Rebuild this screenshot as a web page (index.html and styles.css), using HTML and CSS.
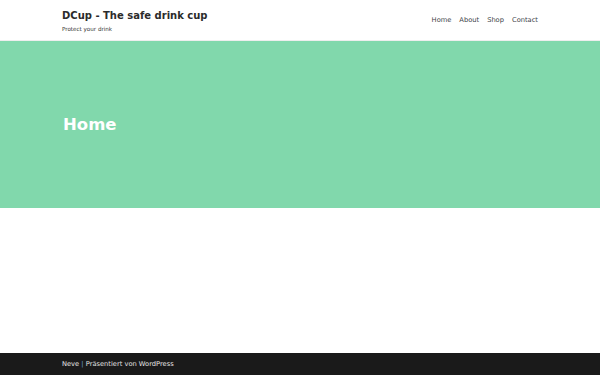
FILE: index.html
```html
<!DOCTYPE html>
<html lang="de">

<head>
  <meta charset="UTF-8">
  <meta name="viewport" content="width=device-width, initial-scale=1.0">
  <title>DCup - The safe drink cup</title>
  <link rel="stylesheet" href="styles.css">
</head>

<body>

  <header class="site-header">
    <div class="container header-inner">
      <div class="branding">
        <p class="site-title">DCup - The safe drink cup</p>
        <p class="site-tagline">Protect your drink</p>
      </div>
      <nav class="main-nav">
        <a href="#">Home</a>
        <a href="#">About</a>
        <a href="#">Shop</a>
        <a href="#">Contact</a>
      </nav>
    </div>
  </header>

  <section class="hero">
    <div class="container">
      <h1>Home</h1>
    </div>
  </section>

  <main class="content"></main>

  <footer class="site-footer">
    <div class="container">
      <a href="#">Neve</a> <span class="sep">|</span> Präsentiert von <a href="#">WordPress</a>
    </div>
  </footer>

</body>

</html>
```

FILE: styles.css
```css
body {
  margin: 0;
  font-family: "DejaVu Sans", sans-serif;
  color: #282828;
  background-color: #ffffff;
  display: flex;
  flex-direction: column;
  min-height: 100vh;
}

.container {
  width: 476px;
  margin: 0 auto;
}

.site-header {
  height: 40px;
  border-bottom: 1px solid #eeeeee;
}

.header-inner {
  display: flex;
  justify-content: space-between;
  align-items: flex-start;
}

.site-title {
  margin: 9px 0 0;
  font-size: 10px;
  font-weight: bold;
  line-height: 13px;
  color: #2b2b2b;
}

.site-tagline {
  margin: 3px 0 0;
  font-size: 5.6px;
  line-height: 8px;
  color: #333;
}

.main-nav {
  display: flex;
  gap: 8px;
  margin-top: 16px;
}

.main-nav a {
  font-size: 6.7px;
  line-height: 9px;
  color: #404248;
  text-decoration: none;
}

.hero {
  height: 167px;
  background-color: #81d8ac;
  display: flex;
  align-items: center;
}

.hero h1 {
  margin: 0 0 0 1px;
  font-size: 16.5px;
  line-height: 20px;
  color: #ffffff;
}

.content {
  flex: 1;
}

.site-footer {
  height: 22px;
  background-color: #1a1a1a;
  color: #e0e0e0;
  font-size: 6.7px;
  line-height: 22px;
}

.site-footer a {
  color: #e6e6e6;
  text-decoration: none;
}

.site-footer .sep {
  color: #6ea0d8;
}
```
